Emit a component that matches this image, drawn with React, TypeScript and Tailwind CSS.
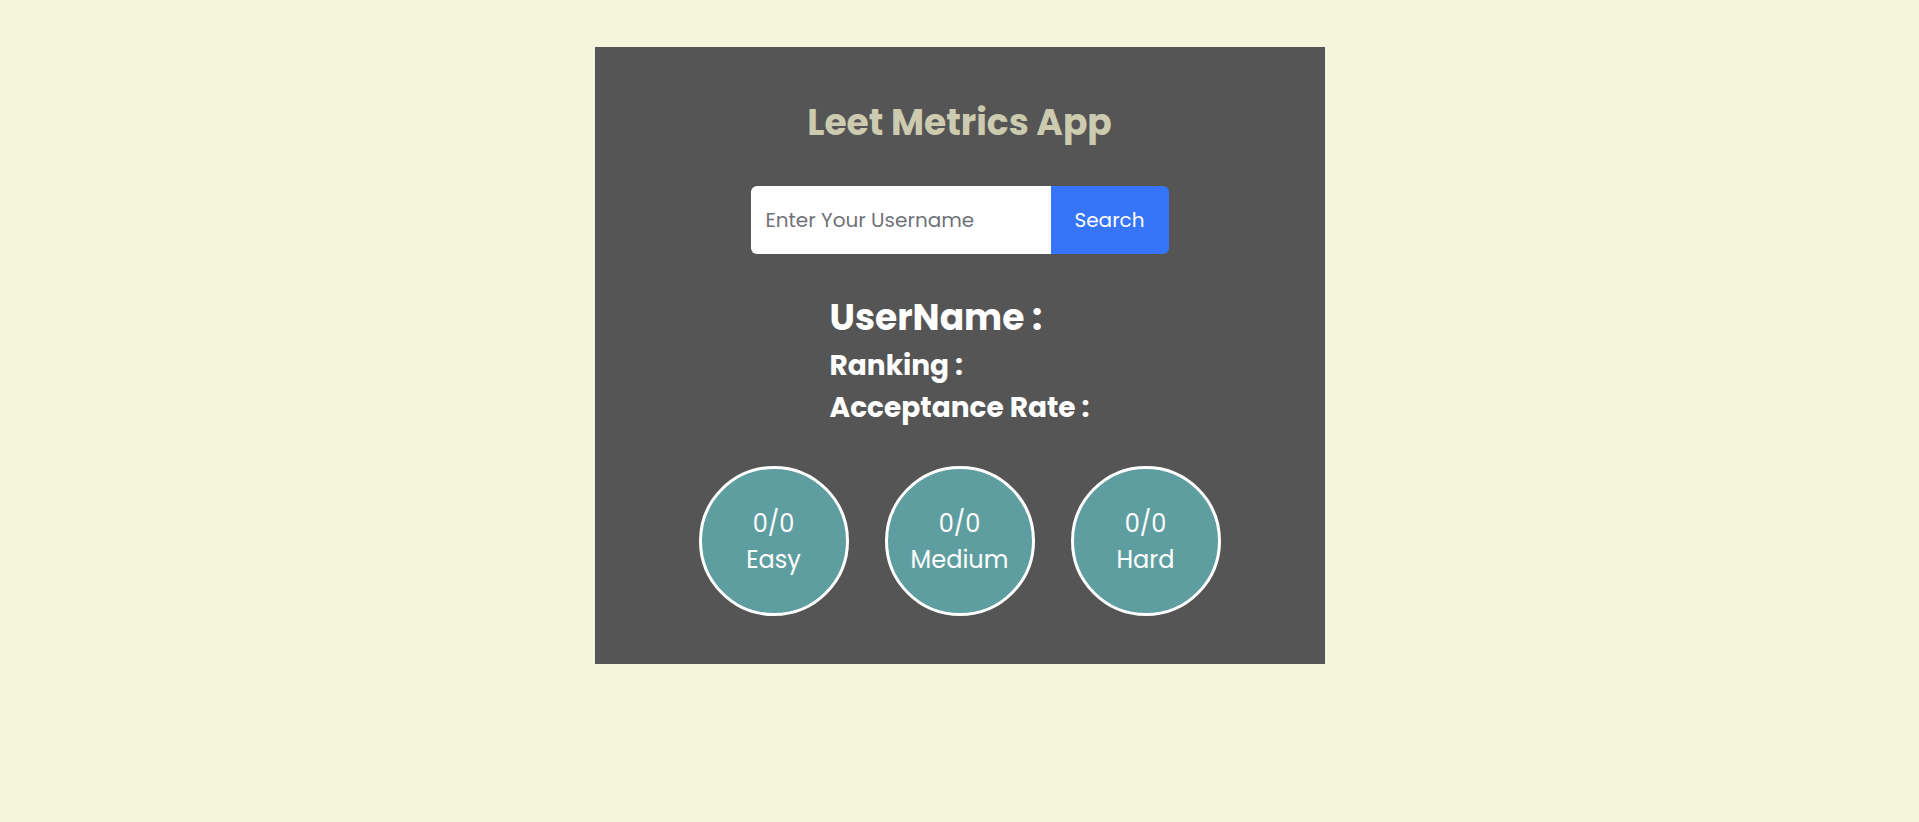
import React from 'react'

const stats = [
  { label: 'Easy', value: '0/0' },
  { label: 'Medium', value: '0/0' },
  { label: 'Hard', value: '0/0' },
]

const App = () => {
  return (
    <div className="min-h-screen bg-[#f5f5dc] pt-[47px] font-['Poppins','Open_Sans',sans-serif]">
      <div className="mx-auto flex h-[617px] w-[730px] flex-col items-center bg-[#555555]">
        <h1 className="mt-[49px] text-[36px] leading-[54px] font-bold text-[#cdcbaf]">
          Leet Metrics App
        </h1>

        {/* Search */}
        <div className="mt-[36px] flex h-[68px] w-[418px] overflow-hidden rounded-md">
          <input
            type="text"
            placeholder="Enter Your Username"
            className="h-full w-[300px] bg-white px-[15px] text-[20px] text-gray-700 outline-none placeholder:text-[#6f7178]"
          />
          <button className="h-full w-[118px] bg-[#3674f9] text-[20px] text-white">Search</button>
        </div>

        {/* Info */}
        <div className="mt-[37px] flex flex-col font-bold text-white">
          <span className="text-[36px] leading-[54px]">UserName :</span>
          <span className="text-[28px] leading-[42px]">Ranking :</span>
          <span className="text-[28px] leading-[42px]">Acceptance Rate :</span>
        </div>

        {/* Progress circles */}
        <div className="mt-[37px] flex gap-[36px]">
          {stats.map((s) => (
            <div
              key={s.label}
              className="flex h-[150px] w-[150px] flex-col items-center justify-center rounded-full border-[3px] border-white bg-[#5f9ea0] pt-[2px] text-[24px] leading-[36px] text-white"
            >
              <span>{s.value}</span>
              <span>{s.label}</span>
            </div>
          ))}
        </div>
      </div>
    </div>
  )
}

export default App
